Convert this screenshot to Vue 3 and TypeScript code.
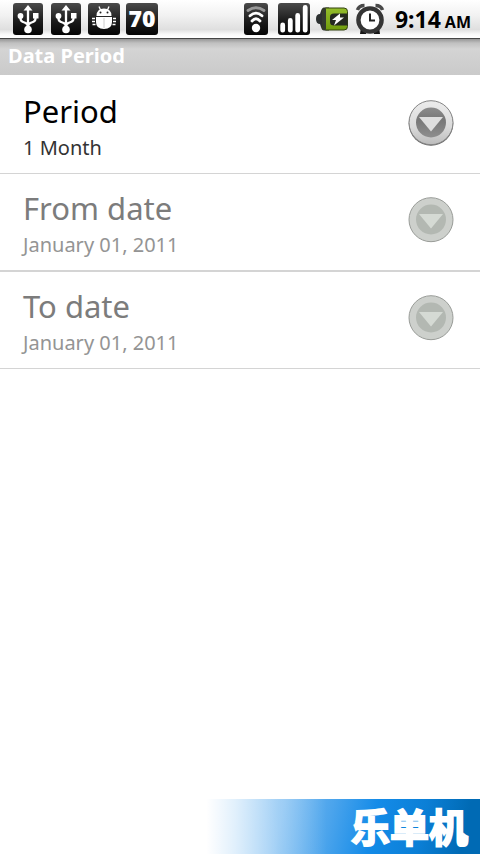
<script setup lang="ts">
interface Setting {
  title: string
  value: string
  enabled: boolean
}

const settings: Setting[] = [
  { title: 'Period', value: '1 Month', enabled: true },
  { title: 'From date', value: 'January 01, 2011', enabled: false },
  { title: 'To date', value: 'January 01, 2011', enabled: false },
]
</script>

<template>
  <div class="screen">
    <svg class="defs" width="0" height="0" aria-hidden="true">
      <defs>
        <linearGradient id="tile" x1="0" y1="0" x2="0" y2="1">
          <stop offset="0" stop-color="#4b4b4b" />
          <stop offset="0.55" stop-color="#1c1c1c" />
          <stop offset="1" stop-color="#050505" />
        </linearGradient>
        <linearGradient id="ring" x1="0" y1="0" x2="0" y2="1">
          <stop offset="0" stop-color="#ececec" />
          <stop offset="0.6" stop-color="#dadada" />
          <stop offset="1" stop-color="#bcbcbc" />
        </linearGradient>
        <linearGradient id="disc" x1="0" y1="0" x2="0" y2="1">
          <stop offset="0" stop-color="#8c8c8c" />
          <stop offset="0.4" stop-color="#777" />
          <stop offset="1" stop-color="#8e8e8e" />
        </linearGradient>
        <linearGradient id="green" x1="0" y1="0" x2="0" y2="1">
          <stop offset="0" stop-color="#94bd2c" />
          <stop offset="1" stop-color="#709d0c" />
        </linearGradient>
      </defs>
    </svg>

    <header class="status">
      <div class="notices">
        <svg v-for="n in 2" :key="n" class="tile" viewBox="-1 0 32 32" role="img" aria-label="USB connected">
          <rect width="30" height="32" rx="3" fill="url(#tile)" />
          <path d="M15 6V26M7.500 14V15.500Q7.500 18.500 11.500 19.500Q15 20.500 15 24M22.500 13V15.500Q22.500 18.500 18.500 19.500Q15 20.500 15 24" fill="none" stroke="#fff" stroke-width="2.300" />
          <path d="M15 2L19.500 7.500H10.500Z" fill="#fff" />
          <circle cx="7.500" cy="13" r="2.900" fill="#fff" />
          <rect x="20" y="10" width="5.500" height="5.500" fill="#fff" />
          <circle cx="15" cy="26.500" r="3.800" fill="#fff" />
        </svg>
        <svg class="tile" viewBox="0 0 32 32" role="img" aria-label="USB debugging">
          <rect width="32" height="32" rx="3" fill="url(#tile)" />
          <path d="M11 3.500L13 8M21 3.500L19 8" stroke="#fff" stroke-width="1.300" />
          <path d="M8.500 13Q8.500 5.500 16 5.500T23.500 13ZM8 14H24V19Q24 26 16 26T8 19Z" fill="#fff" />
          <path d="M4 15.500H7M4 18.500H7M4.500 21.500H7.500M25 15.500H28M25 18.500H28M24.500 21.500H27.500" fill="none" stroke="#fff" stroke-width="1.700" />
          <path d="M16 15V25" stroke="#ccc" stroke-width="1" />
          <circle cx="12.500" cy="9.500" r="1" fill="#222" /><circle cx="19.500" cy="9.500" r="1" fill="#222" />
        </svg>
        <span class="tile count">70</span>
      </div>
      <div class="system">
        <svg class="wifi" viewBox="0 0 24 32" role="img" aria-label="Wi-Fi">
          <rect width="24" height="32" rx="3" fill="url(#tile)" />
          <g fill="none" stroke-linecap="round" stroke-width="2.800">
            <path d="M4 7.500Q12 2 20 7.500" stroke="#999" />
            <path d="M6 12.800Q12 7.500 18 12.800" stroke="#fff" />
            <path d="M8 18Q12 13.500 16 18" stroke="#fff" />
          </g>
          <circle cx="12" cy="25" r="4.200" fill="#fff" />
        </svg>
        <svg class="bars" viewBox="0 0 32 32" role="img" aria-label="Signal strength">
          <rect width="32" height="32" rx="3" fill="url(#tile)" />
          <path d="M4.700 22V27.200M12.300 17.500V27.200M19.700 12.500V27.200M27.200 4.500V27.200" stroke="#fff" stroke-width="4.800" stroke-linecap="round" />
        </svg>
        <svg class="battery" viewBox="0 0 32 26" role="img" aria-label="Battery charging">
          <path d="M8 1.500Q6 1.500 5 5L4 8Q0 8 0 13T4 18L5 21Q6 24.500 8 24.500H13V1.500Z" fill="#2c3030" />
          <rect x="6.500" y="2" width="25" height="22" rx="3.500" fill="url(#green)" stroke="#33420f" />
          <path d="M10 2.500H7.500Q6 4 6 13T7.500 23.500H10Z" fill="#333a30" />
          <path d="M31.500 7.500H18Q14 7.500 14 11V16Q14 19.500 18 19.500H31.500Z" fill="#252a20" />
          <path d="M24 7.500L16 14H20L18 19.500L28 11.500H24Z" fill="#fff" />
        </svg>
        <svg class="alarm" viewBox="0 0 30 32" role="img" aria-label="Alarm set">
          <path d="M2.500 7Q4 2.500 9.500 2.500M27.500 7Q26 2.500 20.500 2.500" fill="none" stroke="#4a4a4a" stroke-width="3.600" />
          <path d="M6 24L5 31H11L12 27M24 24L25 31H19L18 27" fill="#171717" />
          <circle cx="15" cy="17" r="11.600" fill="#fff" stroke="#353535" stroke-width="4.400" />
          <path d="M15 10.500V17.500H20" fill="none" stroke="#222" stroke-width="2" />
        </svg>
        <time class="clock">9:14 <small>AM</small></time>
      </div>
    </header>

    <h1 class="heading">Data Period</h1>

    <main class="list">
      <button v-for="item in settings" :key="item.title" type="button" class="row" :disabled="!item.enabled">
        <span class="labels">
          <span class="title">{{ item.title }}</span>
          <span class="value">{{ item.value }}</span>
        </span>
        <svg class="more" viewBox="0 0 46 46" aria-hidden="true">
          <template v-if="item.enabled">
            <circle cx="23" cy="23.500" r="22.300" fill="#666" />
            <circle cx="23" cy="22.700" r="22" fill="url(#ring)" stroke="#858585" />
            <circle cx="23" cy="22.500" r="15" fill="url(#disc)" />
            <path d="M11 17H35L23 31.500Z" fill="#dedede" />
          </template>
          <template v-else>
            <circle cx="23" cy="22.700" r="22" fill="#cdd0cc" stroke="#999c98" />
            <circle cx="23" cy="22.500" r="15" fill="#b3b8b2" />
            <path d="M11 17H35L23 31.500Z" fill="#d5dad4" />
          </template>
        </svg>
      </button>
    </main>

    <footer class="banner"><span lang="zh-CN">乐单机</span></footer>
  </div>
</template>

<style>
body {
  margin: 0;
}
</style>

<style scoped>
.screen {
  display: flex;
  flex-direction: column;
  min-height: 100vh;
  background: #fff;
  font-family: "Noto Sans", "Open Sans", "Noto Sans CJK SC", sans-serif;
}
.defs {
  position: absolute;
}
svg {
  display: block;
  flex: none;
}
.status {
  display: flex;
  justify-content: space-between;
  align-items: center;
  box-sizing: border-box;
  height: 39px;
  padding: 0 9px 1px 12px;
  border-bottom: 1px solid #444;
  background: linear-gradient(#fff, #f2f2f2 40%, #dfdfdf 78%, #f8f8f8 90%, #fff);
}
.notices,
.system {
  display: flex;
  align-items: center;
}
.notices {
  gap: 6px;
}
.tile {
  width: 32px;
  height: 32px;
}
.count {
  border-radius: 3px;
  background: linear-gradient(#4b4b4b, #1c1c1c 55%, #050505);
  color: #fff;
  font-family: "Open Sans", "Noto Sans", sans-serif;
  font-size: 23px;
  font-weight: 800;
  line-height: 30px;
  text-align: center;
}
.wifi {
  width: 24px;
  height: 32px;
  margin-right: 10px;
}
.bars {
  width: 32px;
  height: 32px;
  margin-right: 6px;
}
.battery {
  width: 32px;
  height: 26px;
  margin-right: 7px;
}
.alarm {
  width: 30px;
  height: 32px;
  margin-right: 10px;
}
.clock {
  padding-top: 3px;
  color: #000;
  font-size: 23px;
  font-weight: 700;
  line-height: 32px;
  white-space: nowrap;
}
.clock small {
  margin-left: -2px;
  font-size: 16px;
}
.heading {
  box-sizing: border-box;
  height: 36px;
  margin: 0;
  padding: 3px 8px;
  background: linear-gradient(#969696, #c0c0c0 4px, #d4d4d4 10px, #cacaca);
  color: #fff;
  font-size: 20px;
  font-weight: 700;
  line-height: 28px;
}
.list {
  padding-top: 2px;
}
.row {
  display: flex;
  justify-content: space-between;
  align-items: flex-start;
  box-sizing: border-box;
  width: 100%;
  min-height: 97px;
  padding: 12px 26px 9px 23px;
  border: 0;
  border-bottom: 1px solid #d4d4d4;
  background: #fff;
  color: #000;
  font-family: inherit;
  text-align: left;
}
.row:nth-child(2) {
  min-height: 98px;
  border-bottom-width: 2px;
}
.labels {
  display: flex;
  flex-direction: column;
}
.title {
  font-size: 31px;
  line-height: 44px;
}
.value {
  color: #333;
  font-size: 20px;
  line-height: 30px;
}
.row:disabled .title {
  color: #7c7c7c;
}
.row:disabled .value {
  color: #949494;
}
.more {
  width: 46px;
  height: 46px;
  margin-top: 11px;
}
.banner {
  display: flex;
  justify-content: flex-end;
  align-items: center;
  box-sizing: border-box;
  height: 55px;
  margin-top: auto;
  padding-right: 12px;
  background:
    linear-gradient(90deg, #fff 43%, rgb(255 255 255 / 75%) 49%, rgb(255 255 255 / 30%) 58%, transparent 68%),
    linear-gradient(102deg, #8cc6f4 45%, #79bbf1 58%, #4ba4ec 68%, #148be8 77%, #0b7fd6 87%, #006ab4 96%);
}
.banner span {
  color: #fff;
  font-family: "Noto Sans CJK SC", sans-serif;
  font-size: 39px;
  font-weight: 700;
  line-height: 52px;
  padding-bottom: 4px;
  -webkit-text-stroke: 2px #fff;
}
</style>
